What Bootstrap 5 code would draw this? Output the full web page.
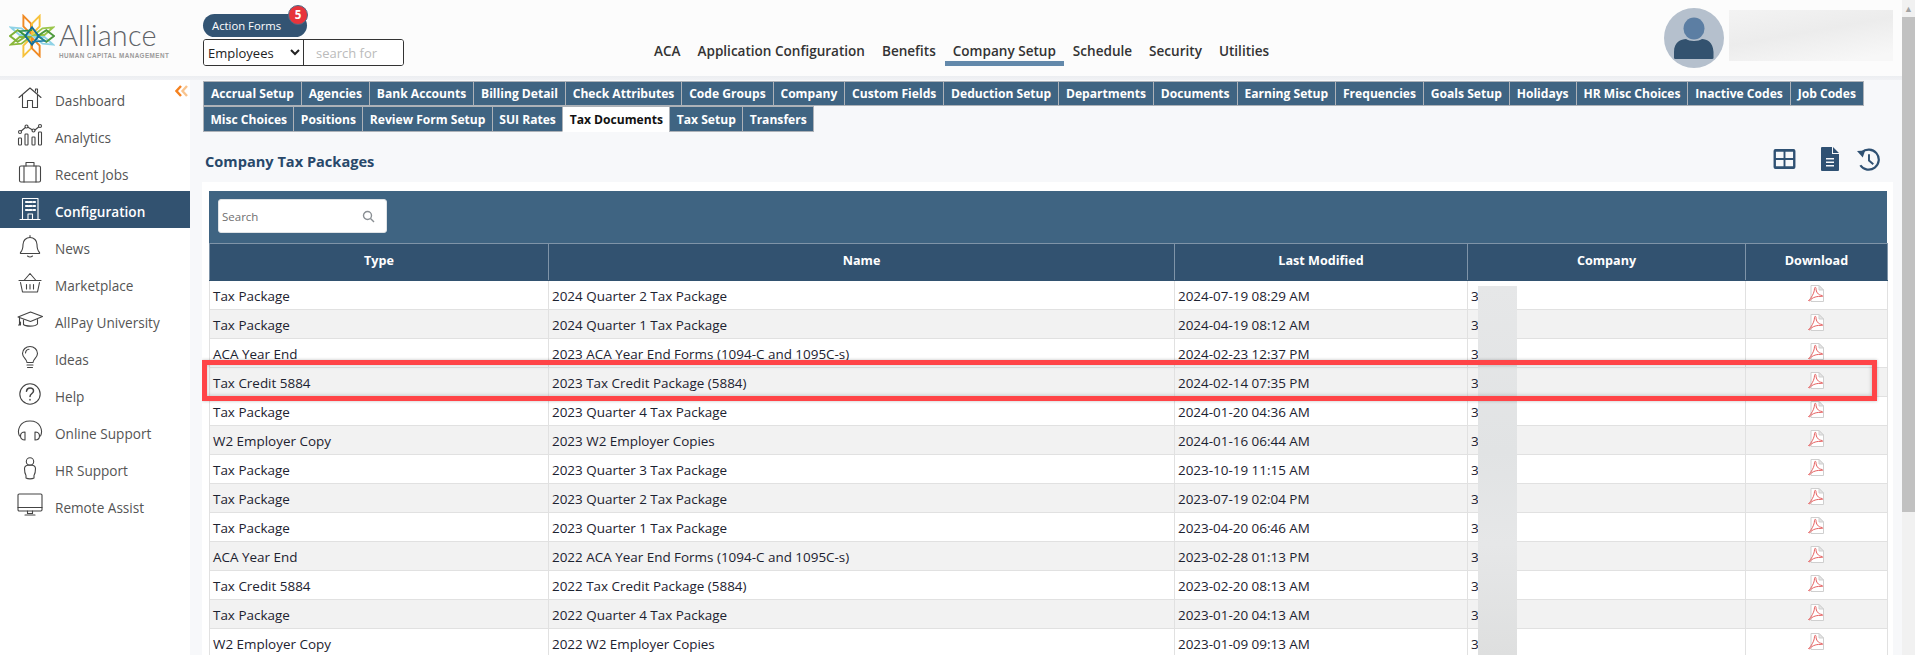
<!DOCTYPE html>
<html lang="en">
<head>
<meta charset="utf-8">
<title>Company Tax Packages</title>
<link href="https://cdn.jsdelivr.net/npm/bootstrap@5.3.0/dist/css/bootstrap.min.css" rel="stylesheet">
<style>
html,body{height:655px;overflow:hidden;}
body{font-family:"Open Sans","Noto Sans",sans-serif;background:#f7f8fa;color:#222;}
.shell{height:655px;}
.mainpane{width:1902px;flex:none;}
.fakebar{width:13px;flex:none;background:#f1f1f1;position:relative;}
.fakebar-arrow{height:17px;color:#a3a3a3;font-size:9px;line-height:17px;text-align:center;}
.fakebar-thumb{height:495px;background:#c1c1c1;}
.topbar{height:76px;background:#fcfcfc;flex:none;}
.topband{height:4px;background:linear-gradient(#eceef1,#f1f2f5);flex:none;}
.brand{width:203px;padding-left:9px;padding-top:14px;height:76px;flex:none;}
.brand-mark{width:46px;height:44px;}
.brand-name{font-family:"Lato",sans-serif;font-weight:300;font-size:28.8px;line-height:25px;color:#5f6367;letter-spacing:.2px;margin-top:9px;}
.brand-sub{font-family:"Liberation Sans",sans-serif;font-size:6.3px;font-weight:700;letter-spacing:.45px;line-height:9px;color:#9a9a9a;margin-top:3px;white-space:nowrap;}
.actions{width:201px;padding-top:14px;flex:none;}
.action-pill{width:104px;height:23px;border-radius:12px;background:#335473;color:#fff;font-size:11.3px;line-height:23px;padding-left:9px;}
.action-count{position:absolute;left:85px;top:-9px;width:20px;height:20px;border-radius:50%;background:#e7343c;color:#fff;font-size:11.5px;font-weight:700;text-align:center;border:1px solid #4d6a85;line-height:18px;}
.filter{margin-top:2px;height:27px;width:201px;border:1px solid #333;border-radius:3px;background:#fff;overflow:hidden;}
.filter select{width:100px;height:25px;border:0;border-right:1px solid #333;background:#fff;font-size:13px;padding:0;color:#222;font-family:"Open Sans",sans-serif;outline:0;}
.filter input{width:99px;border:0;height:25px;font-size:13px;padding:0 0 0 12px;outline:0;font-family:"Open Sans",sans-serif;}
.filter input::placeholder{color:#bbb;}
.modnav{margin-left:242px;padding-top:40px;gap:1px;}
.modnav a{display:block;height:26px;padding:1px 8px 0;color:#333;font-weight:600;font-size:13.55px;line-height:20px;text-decoration:none;white-space:nowrap;}
.modnav a.on{border-bottom:5px solid #6389ab;}
.profile{position:absolute;left:1664px;top:8px;}
.avatar{width:60px;height:60px;border-radius:50%;background:#b5c0cd;flex:none;}
.profile-blur{width:164px;height:51px;margin-top:2px;margin-left:5px;background:linear-gradient(170deg,#f3f3f3 0,#ececec 45%,#f7f7f7 90%);}
.bodyrow{height:575px;min-height:0;}
.sidebar{width:190px;flex:none;background:#fff;position:relative;}
.side-item{height:37px;color:#555;font-size:13.6px;text-decoration:none;padding-left:17px;}
.side-item svg{width:26px;height:24px;flex:none;margin-right:12px;margin-top:-2px;fill:none;stroke:#444;stroke-width:1.1;stroke-linecap:round;stroke-linejoin:round;}
.side-item span{padding-top:5px;}
.side-item.on{background:#325270;color:#fff;font-weight:600;}
.side-item.on svg{stroke:#fff;}
.collapser{position:absolute;left:175px;top:5px;width:13px;height:12px;}
.content{width:1712px;flex:none;position:relative;}
.tabset{padding-left:13px;padding-top:1px;}
.tabx{height:25px;background:#3f6482;color:#fff;font-weight:700;font-size:12.1px;line-height:23px;padding:0 6.9px;border:1px solid #adb2b8;white-space:nowrap;text-decoration:none;margin-right:-1px;}
.tabx.on{background:#fff;color:#111;border-bottom-color:#fff;}
.tabrow2 .tabx{height:26px;line-height:25px;padding:0 6.4px;}
.page-head{margin-left:13px;height:50px;padding-right:22px;}
.page-head h1{font-size:14.6px;font-weight:700;color:#28486a;margin:0;line-height:20px;padding-left:2px;padding-top:19px;}
.page-icons{padding-top:15px;}
.page-icons svg{display:block;}
.ico-grid{margin-top:2px;margin-right:25px;}
.ico-file{margin-right:18px;}
.ico-hist{margin-top:1px;}
.panel-w{position:absolute;left:12px;top:102px;width:1691px;height:473px;background:#fff;padding:9px 6px 0 7px;overflow:hidden;}
.tool-strip{height:52px;background:#3f6482;padding:8px 0 0 9px;}
.searchbox{width:169px;height:34px;background:#fff;border-radius:3px;border:1px solid #dfe3e6;padding:0 11px 0 3px;}
.searchbox span{font-size:11.5px;color:#6f6f6f;padding-top:2px;}
.gridt{width:1678px;table-layout:fixed;border-collapse:collapse;margin:0;}
.gridt .c1{width:339px}.gridt .c2{width:626px}.gridt .c3{width:293px}.gridt .c4{width:278px}.gridt .c5{width:142px}
.gridt th{height:37px;background:#325270;color:#fff;font-size:12.6px;font-weight:700;text-align:center;border:1px solid #7f94a8;border-bottom-color:#325270;padding:0 0 2px;}
.gridt td{height:29px;padding:1px 3px 0;font-size:13.45px;line-height:20px;color:#1c2230;border:1px solid #e1e1e1;white-space:nowrap;overflow:hidden;background:#fff;}
.gridt tbody tr:nth-child(even) td{background:#f2f2f2;}
.gridt td.dl{padding:0;text-align:center;line-height:0;vertical-align:top;}
.gridt td.dl svg{margin-top:4px;margin-left:-2px;}
.smudge{position:absolute;left:1276px;top:104px;width:39px;height:369px;background:linear-gradient(180deg,#e6e7e8,#e1e3e4 45%,#e6e7e8 70%,#dedfdf);}
.callout{position:absolute;left:0;top:178px;width:1675px;height:41px;border:5px solid #ff4447;box-shadow:0 0 3px rgba(0,0,0,.25),inset 0 0 4px rgba(0,0,0,.25);}
</style>
</head>
<body>
<div class="shell d-flex">
  <div class="mainpane d-flex flex-column">
    <header class="topbar d-flex position-relative">
      <div class="brand d-flex">
        <svg class="brand-mark flex-shrink-0" viewBox="0 0 48 46" fill="none" stroke-width="2">
          <g stroke-linejoin="miter">
            <path d="M15 2l8 8v11l-8-8z" stroke="#f08a24"/><path d="M32 2l-8 8v11l8-8z" stroke="#f7c23c"/>
            <path d="M15 44l8-8V25l-8 8z" stroke="#f7c23c"/><path d="M32 44l-8-8V25l8 8z" stroke="#f08a24"/>
            <path d="M2 14l11 1 9 7H11z" stroke="#8ed2e6"/><path d="M46 14l-11 1-9 7h11z" stroke="#9bc64b"/>
            <path d="M2 32l11-1 9-7H11z" stroke="#8cb93b"/><path d="M46 32l-11-1-9-7h11z" stroke="#8ed2e6"/>
            <path d="M1 23l8-6 9 6-9 6z" stroke="#7fb239"/><path d="M47 23l-8-6-9 6 9 6z" stroke="#4f9a3d"/>
            <path d="M24 14l7 9-7 9-7-9z" stroke="#0f6d99"/><path d="M17 23l-6-5 13-1" stroke="#2d8f49" stroke-width="1.6"/><path d="M31 23l6 5-13 1" stroke="#1b7ea8" stroke-width="1.6"/>
          </g>
        </svg>
        <div class="ms-1">
          <div class="brand-name">Alliance</div>
          <div class="brand-sub">HUMAN CAPITAL MANAGEMENT</div>
        </div>
      </div>
      <div class="actions">
        <div class="action-pill position-relative">Action Forms<span class="action-count">5</span></div>
        <div class="filter d-flex">
          <select aria-label="Search in"><option>Employees</option></select>
          <input type="text" placeholder="search for" aria-label="Search for">
        </div>
      </div>
      <nav class="modnav d-flex">
        <a href="#">ACA</a><a href="#">Application Configuration</a><a href="#">Benefits</a><a href="#" class="on">Company Setup</a><a href="#">Schedule</a><a href="#">Security</a><a href="#">Utilities</a>
      </nav>
      <div class="profile d-flex">
        <div class="avatar">
          <svg width="60" height="60" viewBox="0 0 60 60"><ellipse cx="30" cy="20.5" rx="10.5" ry="11" fill="#5c7ea3"/><path d="M10 50V44C10 34 17 31 22 31C25 33.500 35 33.500 38 31C43 31 49 34 49.500 44V50Q49.500 51 48 51H11.500Q10 51 10 50Z" fill="#33526f"/></svg>
        </div>
        <div class="profile-blur"></div>
      </div>
    </header>
    <div class="topband"></div>
    <div class="bodyrow d-flex">
      <aside class="sidebar">
        <svg class="collapser" viewBox="0 0 13 12" fill="none" stroke-width="2.4"><path d="M6 1L1.500 6L6 11" stroke="#f58220"/><path d="M12 1L7.500 6L12 11" stroke="#f9c48e"/></svg>
        <a href="#" class="side-item d-flex align-items-center"><svg viewBox="0 0 26 24"><path d="M2 11.500L13 2l11 9.500"/><path d="M5.500 9v12.500H10.500V14.500H15.500V21.500H20.500V9"/><path d="M18.500 5V3H20.500V7"/></svg><span>Dashboard</span></a>
        <a href="#" class="side-item d-flex align-items-center"><svg viewBox="0 0 26 24"><rect x="1.500" y="15" width="3" height="7" rx=".8"/><rect x="8" y="11" width="3" height="11" rx=".8"/><rect x="15" y="14" width="3" height="8" rx=".8"/><rect x="21.500" y="9" width="3" height="13" rx=".8"/><circle cx="3" cy="9" r="1.500"/><circle cx="9.500" cy="3.500" r="1.500"/><circle cx="16.500" cy="7.500" r="1.500"/><circle cx="23" cy="3" r="1.500"/><path d="M4.200 8l4.200-3.500M11 4.300l4.200 2.500M18 7l3.600-3"/></svg><span>Analytics</span></a>
        <a href="#" class="side-item d-flex align-items-center"><svg viewBox="0 0 26 24"><rect x="2.500" y="6" width="21" height="16" rx="1.500"/><path d="M9 6V2.500H17V6M7 6V22M19 6V22"/></svg><span>Recent Jobs</span></a>
        <a href="#" class="side-item on d-flex align-items-center"><svg viewBox="0 0 26 24"><path d="M5.500 22V1.500H21V22M3 22.500H23"/><path d="M11 22V17H15.500V22"/><path stroke-width="2.200" d="M9 5h2M12.500 5h2M16.500 5h1.500M9 9h2M12.500 9h2M16.500 9h1.500M9 13h2M12.500 13h2M16.500 13h1.500"/></svg><span>Configuration</span></a>
        <a href="#" class="side-item d-flex align-items-center"><svg viewBox="0 0 26 24"><path d="M3.500 18.500C6 16 6 13.500 6 10.500C6 6.500 9 3.500 13 3.500C17 3.500 20 6.500 20 10.500C20 13.500 20 16 22.500 18.500Q23 19.500 22 19.500H4Q3 19.500 3.500 18.500Z"/><path d="M13 1.500V3.500M10.500 22Q13 24 15.500 22"/></svg><span>News</span></a>
        <a href="#" class="side-item d-flex align-items-center"><svg viewBox="0 0 26 24"><path d="M2 9.500H24M7 9.500L13 2.500L19 9.500"/><path d="M3.500 11.500L5.500 21H20.500L22.500 11.500"/><path d="M9.500 13.500V18M13 13.500V18M16.500 13.500V18"/></svg><span>Marketplace</span></a>
        <a href="#" class="side-item d-flex align-items-center"><svg viewBox="0 0 26 24"><path d="M1 9L13.500 4L25.500 8.500L13.500 13.500Z"/><path d="M6.500 12V16.500C8.500 18.500 18 19 20.500 16V11.500"/><path d="M2.500 10V17M1.500 17H3.500V14"/></svg><span>AllPay University</span></a>
        <a href="#" class="side-item d-flex align-items-center"><svg viewBox="0 0 26 24"><path d="M10 17.500C10 14 5.500 12.500 5.500 8.500C5.500 4.500 9 1.500 13 1.500C17 1.500 20.500 4.500 20.500 8.500C20.500 12.500 16 14 16 17.500Z"/><path d="M10 20H16M10.500 22.500H15.500M8.500 8C8.700 6 10 4.500 12 4.300"/></svg><span>Ideas</span></a>
        <a href="#" class="side-item d-flex align-items-center"><svg viewBox="0 0 26 24"><circle cx="13" cy="12" r="10.200"/><path stroke-width="1.500" d="M9.500 9.200C9.700 7 11.200 6 13 6C15 6 16.500 7.200 16.500 9C16.500 11.500 13 11.500 13 14.500M13 17.500V18"/></svg><span>Help</span></a>
        <a href="#" class="side-item d-flex align-items-center"><svg viewBox="0 0 26 24"><path d="M2.500 17C0 12 2 2 13 2C24 2 26 12 23.500 17"/><path d="M8 13V21C5 21 3.500 19.500 3.500 17C3.500 14.500 5 13 8 13ZM18 13V21C21 21 22.500 19.500 22.500 17C22.500 14.500 21 13 18 13Z"/></svg><span>Online Support</span></a>
        <a href="#" class="side-item d-flex align-items-center"><svg viewBox="0 0 26 24"><circle cx="13" cy="5.500" r="3.700"/><path d="M9 22V19.500C8 18 7.500 15 7.500 12.500C7.500 10 9.500 9 13 9C16.500 9 18.500 10 18.500 12.500C18.500 15 18 18 17 19.500V22C15 23.200 11 23.200 9 22Z"/></svg><span>HR Support</span></a>
        <a href="#" class="side-item d-flex align-items-center"><svg viewBox="0 0 26 24"><rect x="1" y="1" width="24" height="17" rx="1.200"/><path d="M1 14.500H25M10.500 18V20.500H15.500V18M8 22H18"/></svg><span>Remote Assist</span></a>
      </aside>
      <main class="content">
        <div class="tabset">
          <div class="d-flex">
            <a href="#" class="tabx">Accrual Setup</a><a href="#" class="tabx">Agencies</a><a href="#" class="tabx">Bank Accounts</a><a href="#" class="tabx">Billing Detail</a><a href="#" class="tabx">Check Attributes</a><a href="#" class="tabx">Code Groups</a><a href="#" class="tabx">Company</a><a href="#" class="tabx">Custom Fields</a><a href="#" class="tabx">Deduction Setup</a><a href="#" class="tabx">Departments</a><a href="#" class="tabx">Documents</a><a href="#" class="tabx">Earning Setup</a><a href="#" class="tabx">Frequencies</a><a href="#" class="tabx">Goals Setup</a><a href="#" class="tabx">Holidays</a><a href="#" class="tabx">HR Misc Choices</a><a href="#" class="tabx">Inactive Codes</a><a href="#" class="tabx">Job Codes</a>
          </div>
          <div class="d-flex tabrow2">
            <a href="#" class="tabx">Misc Choices</a><a href="#" class="tabx">Positions</a><a href="#" class="tabx">Review Form Setup</a><a href="#" class="tabx">SUI Rates</a><a href="#" class="tabx on">Tax Documents</a><a href="#" class="tabx">Tax Setup</a><a href="#" class="tabx">Transfers</a>
          </div>
        </div>
        <div class="page-head d-flex justify-content-between">
          <h1>Company Tax Packages</h1>
          <div class="page-icons d-flex align-items-start">
            <svg class="ico-grid" width="23" height="20" viewBox="0 0 23 21" fill="#2f5173"><path fill-rule="evenodd" d="M2 0H21A2 2 0 0 1 23 2V19A2 2 0 0 1 21 21H2A2 2 0 0 1 0 19V2A2 2 0 0 1 2 0ZM2.500 3V9.500H10.500V3ZM12.500 3V9.500H20.500V3ZM2.500 11.500V18H10.500V11.500ZM12.500 11.500V18H20.500V11.500Z"/></svg>
            <svg class="ico-file" width="18" height="24" viewBox="0 0 18 24" fill="#2f5173"><path fill-rule="evenodd" d="M1 0H11V7H18V23A1 1 0 0 1 17 24H1A1 1 0 0 1 0 23V1A1 1 0 0 1 1 0ZM12 0L18 6H12ZM5 11V12.500H13V11ZM5 14.500V16H13V14.500ZM5 18V19.500H13V18Z"/></svg>
            <svg class="ico-hist" width="23" height="23" viewBox="0 0 24 24" fill="none" stroke="#2f5173"><path stroke-width="2.300" d="M5 4.500A10.500 10.500 0 1 1 3.500 18"/><path stroke="none" fill="#2f5173" d="M0 3L8.500 2.500L6 10Z"/><path stroke-width="2" d="M12.500 6.500V13L17 17"/></svg>
          </div>
        </div>
        <div class="panel-w">
          <div class="tool-strip">
            <div class="searchbox d-flex align-items-center justify-content-between">
              <span>Search</span>
              <svg width="13" height="13" viewBox="0 0 13 13" fill="none" stroke="#8a8f94" stroke-width="1.400"><circle cx="5.500" cy="5.500" r="4"/><path d="M8.500 8.500L12 12"/></svg>
            </div>
          </div>
          <table class="gridt">
            <colgroup><col class="c1"><col class="c2"><col class="c3"><col class="c4"><col class="c5"></colgroup>
            <thead><tr><th>Type</th><th>Name</th><th>Last Modified</th><th>Company</th><th>Download</th></tr></thead>
            <tbody id="rows"></tbody>
          </table>
          <div class="smudge"></div>
          <div class="callout"></div>
        </div>
      </main>
    </div>
  </div>
  <div class="fakebar">
    <div class="fakebar-arrow">&#9650;</div>
    <div class="fakebar-thumb"></div>
  </div>
</div>
<script>
var data=[
["Tax Package","2024 Quarter 2 Tax Package","2024-07-19 08:29 AM"],
["Tax Package","2024 Quarter 1 Tax Package","2024-04-19 08:12 AM"],
["ACA Year End","2023 ACA Year End Forms (1094-C and 1095C-s)","2024-02-23 12:37 PM"],
["Tax Credit 5884","2023 Tax Credit Package (5884)","2024-02-14 07:35 PM"],
["Tax Package","2023 Quarter 4 Tax Package","2024-01-20 04:36 AM"],
["W2 Employer Copy","2023 W2 Employer Copies","2024-01-16 06:44 AM"],
["Tax Package","2023 Quarter 3 Tax Package","2023-10-19 11:15 AM"],
["Tax Package","2023 Quarter 2 Tax Package","2023-07-19 02:04 PM"],
["Tax Package","2023 Quarter 1 Tax Package","2023-04-20 06:46 AM"],
["ACA Year End","2022 ACA Year End Forms (1094-C and 1095C-s)","2023-02-28 01:13 PM"],
["Tax Credit 5884","2022 Tax Credit Package (5884)","2023-02-20 08:13 AM"],
["Tax Package","2022 Quarter 4 Tax Package","2023-01-20 04:13 AM"],
["W2 Employer Copy","2022 W2 Employer Copies","2023-01-09 09:13 AM"]];
var pdf='<svg width="16" height="17" viewBox="0 0 16 17"><path d="M3 .5H11L15.500 5V16.500H3Z" fill="#fff" stroke="#cfcfcf"/><path d="M11 .5V5H15.500Z" fill="#e6e6e6" stroke="#cfcfcf"/><path d="M.5 15.500C3 13.500 6.500 8 6.500 3.500C6.500 2 8 2 8 3.500C8 7 10 10 14 10.500C15 10.700 15 11.800 13.500 11.500C10 11 4 12 1.500 16Z" fill="none" stroke="#e56060" stroke-width="1"/></svg>';
document.getElementById('rows').innerHTML=data.map(function(r){return '<tr><td>'+r[0]+'</td><td>'+r[1]+'</td><td>'+r[2]+'</td><td>3</td><td class="dl">'+pdf+'</td></tr>';}).join('');
</script>
<script src="https://cdn.jsdelivr.net/npm/bootstrap@5.3.0/dist/js/bootstrap.bundle.min.js"></script>
</body>
</html>
